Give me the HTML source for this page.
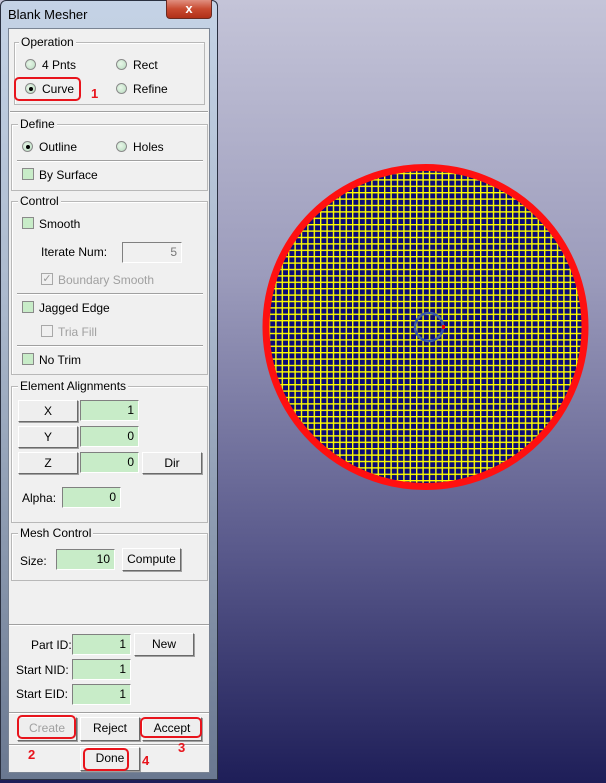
<!DOCTYPE html>
<html><head><meta charset="utf-8"><style>
*{margin:0;padding:0;box-sizing:border-box}
body{width:606px;height:783px;overflow:hidden;position:relative;font-family:"Liberation Sans",sans-serif;font-size:12px;color:#000;
background:linear-gradient(180deg,#c4c4d8 0%,#9c9cbc 35%,#5a5a8c 70%,#1e1e58 100%)}
.a{position:absolute}
.win{left:0;top:0;width:218px;height:780px;background:linear-gradient(180deg,#c5d3e6,#aab8cc 40%,#6a7890 100%);border:1px solid #2a3040;border-radius:6px 6px 0 0}
.client{left:8px;top:28px;width:202px;height:745px;background:#f0f0f0;border:1px solid #7a8494}
.grp{position:absolute;border:1px solid #b8b8b8;box-shadow:1px 1px 0 #fff inset}
.lbl{position:absolute;background:#f0f0f0;padding:0 2px;line-height:14px}
.sep{position:absolute;height:2px;border-top:1px solid #a0a0a0;border-bottom:1px solid #fff}
.t{position:absolute;line-height:14px;white-space:nowrap}
.rad{position:absolute;width:11px;height:11px;border-radius:50%;border:1px solid #8a8a8a;background:radial-gradient(circle at 40% 40%,#e8f6e8,#b8dcc0)}
.rad.on::after{content:"";position:absolute;left:3px;top:3px;width:4px;height:4px;border-radius:50%;background:#000}
.cb{position:absolute;width:12px;height:12px;border:1px solid #8a8a8a;background:#c8ecc8}
.cb.dis{background:#f0f0f0;border-color:#a8a8a8}
.fld{position:absolute;background:#c8ecc8;border:1px solid;border-color:#808080 #fff #fff #808080;text-align:right;padding-right:4px;line-height:18px}
.btn{position:absolute;background:#eeeeee;border:1px solid;border-color:#fff #6a6a6a #6a6a6a #fff;box-shadow:1px 1px 0 #a0a0a0;text-align:center;line-height:20px}
.red{position:absolute;border:2px solid #e8141c;border-radius:5px}
.num{position:absolute;color:#e8141c;font-weight:bold;font-size:13px}
</style></head><body>
<div class="a win"></div>
<div class="t" style="left:8px;top:8px;font-size:13px">Blank Mesher</div>
<div class="a" style="left:166px;top:0;width:46px;height:19px;border:1px solid #6a2a20;border-top:none;border-radius:0 0 4px 4px;background:linear-gradient(180deg,#e09080,#c84a30 50%,#b03018);color:#fff;text-align:center;font-weight:bold;font-size:13px;line-height:17px">x</div>
<div class="a client"></div>

<div class="grp" style="left:14px;top:42px;width:191px;height:63px"></div>
<div class="lbl" style="left:19px;top:35px">Operation</div>
<div class="rad" style="left:25px;top:59px"></div><div class="t" style="left:42px;top:58px">4 Pnts</div>
<div class="rad" style="left:116px;top:59px"></div><div class="t" style="left:133px;top:58px">Rect</div>
<div class="rad on" style="left:25px;top:83px"></div><div class="t" style="left:42px;top:82px">Curve</div>
<div class="rad" style="left:116px;top:83px"></div><div class="t" style="left:133px;top:82px">Refine</div>
<div class="red" style="left:14px;top:77px;width:67px;height:24px"></div>
<div class="num" style="left:91px;top:86px">1</div>
<div class="sep" style="left:10px;top:111px;width:198px"></div>

<div class="grp" style="left:11px;top:124px;width:197px;height:67px"></div>
<div class="lbl" style="left:18px;top:117px">Define</div>
<div class="rad on" style="left:22px;top:141px"></div><div class="t" style="left:39px;top:140px">Outline</div>
<div class="rad" style="left:116px;top:141px"></div><div class="t" style="left:133px;top:140px">Holes</div>
<div class="sep" style="left:17px;top:160px;width:186px"></div>
<div class="cb" style="left:22px;top:168px"></div><div class="t" style="left:39px;top:168px">By Surface</div>

<div class="grp" style="left:11px;top:201px;width:197px;height:174px"></div>
<div class="lbl" style="left:18px;top:194px">Control</div>
<div class="cb" style="left:22px;top:217px"></div><div class="t" style="left:39px;top:217px">Smooth</div>
<div class="t" style="left:41px;top:245px">Iterate Num:</div>
<div class="a" style="left:122px;top:242px;width:60px;height:21px;border:1px solid;border-color:#808080 #fff #fff #808080;background:#f0f0f0;color:#777;text-align:right;padding-right:4px;line-height:19px">5</div>
<div class="cb dis" style="left:41px;top:273px;color:#999;font-size:11px;line-height:10px;text-align:center">✓</div><div class="t" style="left:58px;top:273px;color:#a0a0a0">Boundary Smooth</div>
<div class="sep" style="left:17px;top:293px;width:186px"></div>
<div class="cb" style="left:22px;top:301px"></div><div class="t" style="left:39px;top:301px">Jagged Edge</div>
<div class="cb dis" style="left:41px;top:325px"></div><div class="t" style="left:58px;top:325px;color:#a0a0a0">Tria Fill</div>
<div class="sep" style="left:17px;top:345px;width:186px"></div>
<div class="cb" style="left:22px;top:353px"></div><div class="t" style="left:39px;top:353px">No Trim</div>

<div class="grp" style="left:11px;top:386px;width:197px;height:137px"></div>
<div class="lbl" style="left:18px;top:379px">Element Alignments</div>
<div class="btn" style="left:18px;top:400px;width:60px;height:22px">X</div>
<div class="fld" style="left:80px;top:400px;width:59px;height:21px">1</div>
<div class="btn" style="left:18px;top:426px;width:60px;height:22px">Y</div>
<div class="fld" style="left:80px;top:426px;width:59px;height:21px">0</div>
<div class="btn" style="left:18px;top:452px;width:60px;height:22px">Z</div>
<div class="fld" style="left:80px;top:452px;width:59px;height:21px">0</div>
<div class="btn" style="left:142px;top:452px;width:60px;height:22px">Dir</div>
<div class="t" style="left:22px;top:491px">Alpha:</div>
<div class="fld" style="left:62px;top:487px;width:59px;height:21px">0</div>

<div class="grp" style="left:11px;top:533px;width:197px;height:48px"></div>
<div class="lbl" style="left:18px;top:526px">Mesh Control</div>
<div class="t" style="left:20px;top:554px">Size:</div>
<div class="fld" style="left:56px;top:549px;width:59px;height:21px">10</div>
<div class="btn" style="left:122px;top:548px;width:59px;height:23px">Compute</div>

<div class="sep" style="left:9px;top:624px;width:200px"></div>
<div class="t" style="left:31px;top:638px">Part ID:</div>
<div class="fld" style="left:72px;top:634px;width:59px;height:21px">1</div>
<div class="btn" style="left:134px;top:633px;width:60px;height:23px">New</div>
<div class="t" style="left:16px;top:663px">Start NID:</div>
<div class="fld" style="left:72px;top:659px;width:59px;height:21px">1</div>
<div class="t" style="left:16px;top:687px">Start EID:</div>
<div class="fld" style="left:72px;top:684px;width:59px;height:21px">1</div>

<div class="sep" style="left:9px;top:712px;width:200px"></div>
<div class="btn" style="left:17px;top:717px;width:60px;height:24px;color:#a0a0a0">Create</div>
<div class="btn" style="left:80px;top:717px;width:60px;height:24px">Reject</div>
<div class="btn" style="left:142px;top:717px;width:60px;height:24px">Accept</div>
<div class="red" style="left:17px;top:715px;width:59px;height:24px"></div>
<div class="red" style="left:140px;top:717px;width:62px;height:21px"></div>
<div class="sep" style="left:9px;top:744px;width:200px"></div>
<div class="num" style="left:28px;top:747px">2</div>
<div class="num" style="left:178px;top:740px">3</div>
<div class="btn" style="left:80px;top:747px;width:60px;height:24px">Done</div>
<div class="red" style="left:83px;top:748px;width:46px;height:23px"></div>
<div class="num" style="left:142px;top:753px">4</div>

<svg class="a" style="left:0;top:0" width="606" height="783">
<defs>
<pattern id="g" x="0" y="0" width="6.4" height="6.4" patternUnits="userSpaceOnUse">
<rect width="6.4" height="6.4" fill="#ffff00"/><rect x="1.4" y="1.4" width="5" height="5" fill="#0a0a78"/>
</pattern>
<clipPath id="c"><circle cx="425.5" cy="327" r="160"/></clipPath>
</defs>
<rect x="263" y="164" width="326" height="326" fill="url(#g)" clip-path="url(#c)"/>
<circle cx="425.5" cy="327" r="159.5" fill="none" stroke="#ff1010" stroke-width="7"/>
<circle cx="429" cy="327" r="14" fill="none" stroke="#3a5aa8" stroke-width="2.5"/>
<rect x="442" y="325" width="3" height="4" fill="#e00"/>
</svg>
</body></html>
